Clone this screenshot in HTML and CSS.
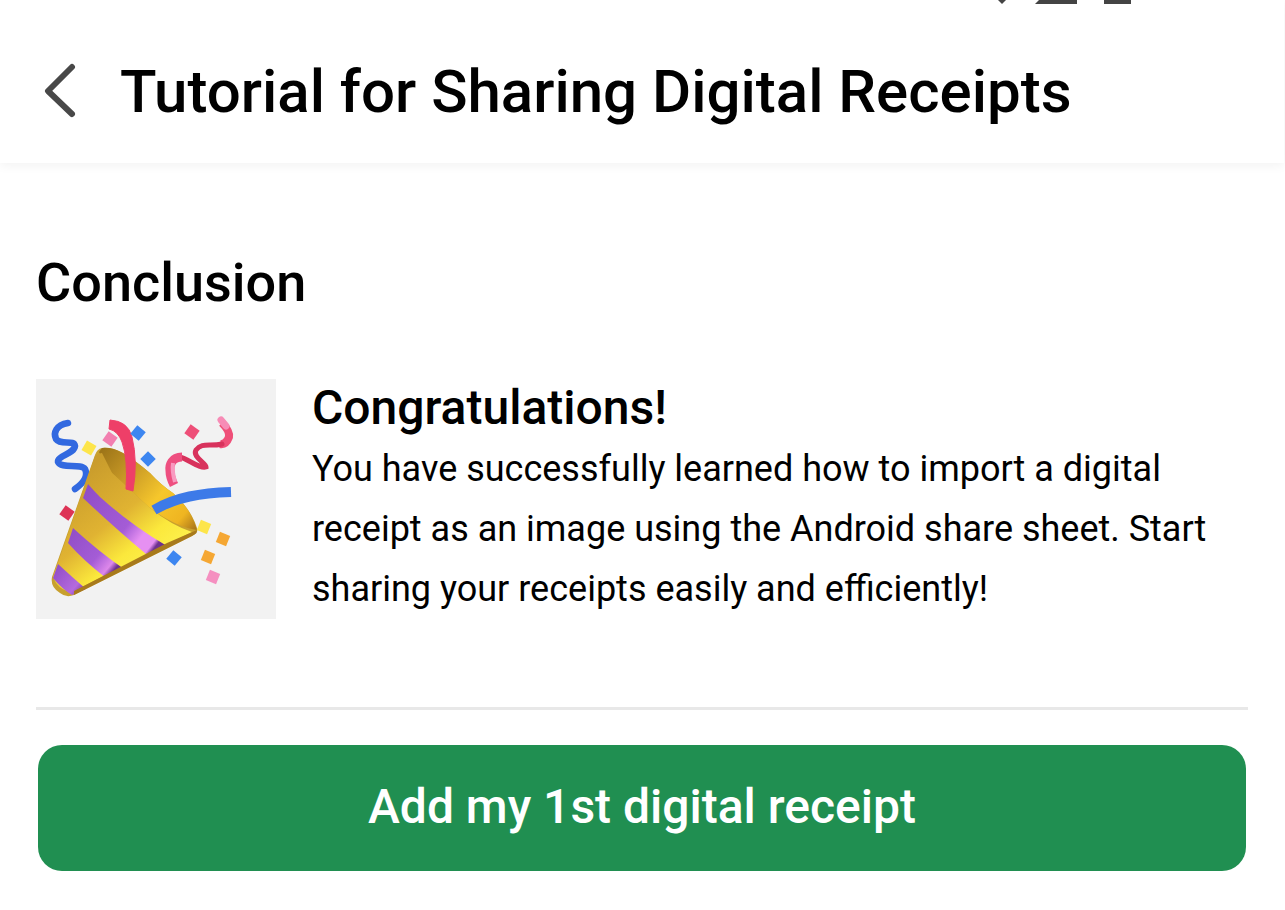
FILE: index.html
```html
<html>
    <head>
        <link rel="stylesheet" href="styles.css">
    </head>
    <body>
        <div class="topbar">
            <div class="header">
                <div class="statusbar">
                    <svg class="status-dot" width="8" height="4" viewBox="0 0 8 4"><path d="M0 0H8L4 4Z" fill="#444"/></svg>
                    <svg class="status-wide" width="42" height="4" viewBox="0 0 42 4"><path d="M4 0H42V4H0Z" fill="#444"/></svg>
                    <div class="status-batt"></div>
                </div>
                <div class="header-row">
                    <svg class="back" width="32" height="56" viewBox="0 0 32 56">
                        <path d="M28 4L4 28L28 51" fill="none" stroke="#484848" stroke-width="6" stroke-linecap="round" stroke-linejoin="round"/>
                    </svg>
                    <h1 class="title">Tutorial for Sharing Digital Receipts</h1>
                </div>
            </div>
        </div>
        <div class="content">
            <h2 class="section-title">Conclusion</h2>
            <div class="card">
                <div class="thumb">
                    <svg class="party" width="240" height="240" viewBox="0 0 240 240">
                        <defs>
                            <linearGradient id="gold" gradientUnits="userSpaceOnUse" x1="50" y1="90" x2="120" y2="180">
                                <stop offset="0" stop-color="#c99c2c"/>
                                <stop offset="0.5" stop-color="#e0b332"/>
                                <stop offset="0.8" stop-color="#fbe83c"/>
                                <stop offset="1" stop-color="#fdf04a"/>
                            </linearGradient>
                            <linearGradient id="purple" gradientUnits="userSpaceOnUse" x1="45" y1="110" x2="130" y2="175">
                                <stop offset="0" stop-color="#8f4cc6"/>
                                <stop offset="0.55" stop-color="#a45cd6"/>
                                <stop offset="0.72" stop-color="#e690f2"/>
                                <stop offset="0.84" stop-color="#e690f2"/>
                                <stop offset="0.88" stop-color="#6e3190"/>
                                <stop offset="1" stop-color="#6e3190"/>
                            </linearGradient>
                            <linearGradient id="purple2" gradientUnits="userSpaceOnUse" x1="30" y1="150" x2="88" y2="198">
                                <stop offset="0" stop-color="#8f4cc6"/>
                                <stop offset="0.55" stop-color="#a45cd6"/>
                                <stop offset="0.76" stop-color="#dd88ea"/>
                                <stop offset="0.84" stop-color="#6e3190"/>
                                <stop offset="1" stop-color="#6e3190"/>
                            </linearGradient>
                            <linearGradient id="purple3" gradientUnits="userSpaceOnUse" x1="18" y1="188" x2="50" y2="214">
                                <stop offset="0" stop-color="#8f4cc6"/>
                                <stop offset="0.7" stop-color="#b56ade"/>
                                <stop offset="1" stop-color="#6e3190"/>
                            </linearGradient>
                            <linearGradient id="inner" gradientUnits="userSpaceOnUse" x1="66" y1="70" x2="160" y2="150">
                                <stop offset="0" stop-color="#9c7418"/>
                                <stop offset="0.3" stop-color="#c99a26"/>
                                <stop offset="0.6" stop-color="#f6c72c"/>
                                <stop offset="0.85" stop-color="#efb521"/>
                                <stop offset="1" stop-color="#a8741a"/>
                            </linearGradient>
                            <clipPath id="cone">
                                <path d="M59 76L16 198Q14 208 24 214Q30 219 38 216L156 157Q164 153 161 151Q140 146 114 129L76 94Z"/>
                            </clipPath>
                        </defs>
                        <path d="M32 44C20 46 17 54 20 60C25 67 38 60 39 67C38 75 21 77 22 83C25 90 45 84 49 90C53 98 46 105 39 110" fill="none" stroke="#3269e0" stroke-width="6.500" stroke-linecap="round"/>
                        <path d="M66 69Q76 68 87 74Q100 82 114 94Q125 106 137 114Q155 130 161 149Q163 153 156 157L38 216Q30 219 24 214Q14 208 16 198L59 76Q61 70 66 69Z" fill="#c8a02e"/>
                        <path d="M66 69Q76 68 87 74Q100 82 114 94Q125 106 137 114Q155 130 161 151Q140 148 114 129L76 94Q68 84 63 73Z" fill="url(#inner)"/>
                        <path d="M59 77Q64 74 66 74L76 94L114 129Q135 146 156 153L38 212Q28 214 20 204L17 198Z" fill="url(#gold)"/>
                        <g clip-path="url(#cone)">
                            <path d="M52 105Q58 112 64 118Q95 146 131 167L110 175Q80 150 47 119Z" fill="url(#purple)"/>
                            <path d="M37 149Q62 172 88 190L70 199Q48 182 32 164Z" fill="url(#purple2)"/>
                            <path d="M22 185Q36 198 50 210L36 216Q26 210 17 199Z" fill="url(#purple3)"/>
                            <path d="M161 151L131 164L38 212L38 218L160 158Z" fill="#a87a1c"/>
                        </g>
                        <path d="M74 41Q92 42 96 58Q102 82 97 112L90 110Q92 80 86 63Q82 52 73 50Z" fill="#ee3f68" stroke="#ee3f68" stroke-linejoin="round"/>
                        <path d="M186 44Q194 52 193 58Q190 66 184 65" fill="none" stroke="#ef4f78" stroke-width="8"/>
                        <path d="M185 41L190 47" fill="none" stroke="#f78cb6" stroke-width="7" stroke-linecap="round"/>
                        <path d="M186 65C174 68 166 63 160 71C156 78 170 84 170 88C164 90 152 80 144 78" fill="none" stroke="#d8325c" stroke-width="5" stroke-linecap="round"/>
                        <path d="M146 78C136 78 133 86 134 92C134 98 136 102 138 106" fill="none" stroke="#ee4f80" stroke-width="9"/>
                        <path d="M137 84C136 90 137 96 139 103" fill="none" stroke="#f99ac0" stroke-width="4"/>
                        <path d="M118 131C140 118 165 114 195 113" fill="none" stroke="#3d7ae8" stroke-width="10"/>
                        <g>
                            <rect x="47.500" y="63.500" width="11" height="11" transform="rotate(30 53 69)" fill="#fde54a"/>
                            <rect x="68.500" y="54.500" width="11" height="11" transform="rotate(35 74 60)" fill="#f27fb0"/>
                            <rect x="96.500" y="48.500" width="11" height="11" transform="rotate(40 102 54)" fill="#3d86f0"/>
                            <rect x="106.500" y="74.500" width="11" height="11" transform="rotate(45 112 80)" fill="#3d86f0"/>
                            <rect x="150.500" y="47.500" width="11" height="11" transform="rotate(35 156 53)" fill="#ee4f78"/>
                            <rect x="25.500" y="128.500" width="11" height="11" transform="rotate(35 31 134)" fill="#dd3355"/>
                            <rect x="162.500" y="142.500" width="11" height="11" transform="rotate(22 168 148)" fill="#fde54a"/>
                            <rect x="181.500" y="154.500" width="11" height="11" transform="rotate(22 187 160)" fill="#f5a733"/>
                            <rect x="166.500" y="172.500" width="11" height="11" transform="rotate(22 172 178)" fill="#f5a733"/>
                            <rect x="132.500" y="173.500" width="11" height="11" transform="rotate(40 138 179)" fill="#3d86f0"/>
                            <rect x="171.500" y="192.500" width="11" height="11" transform="rotate(22 177 198)" fill="#f58fc0"/>
                        </g>
                    </svg>
                </div>
                <div class="card-text">
                    <h3 class="card-title">Congratulations!</h3>
                    <p class="card-body">You have successfully learned how to import a digital receipt as an image using the Android share sheet. Start sharing your receipts easily and efficiently!</p>
                </div>
            </div>
            <div class="divider"></div>
            <button class="primary">Add my 1st digital receipt</button>
        </div>
    </body>
</html>
```
FILE: styles.css
```css
* {
    font-family: Roboto, sans-serif;
    box-sizing: border-box;
}
body {
    margin: 0;
    background-color: #fff;
    color: #000;
}
.header {
    height: 163px;
    margin-right: 1px;
    background-color: #fff;
    box-shadow: 0 3px 10px rgba(0, 0, 0, 0.05);
}
.statusbar {
    display: flex;
    justify-content: flex-end;
    height: 4px;
    padding-right: 153px;
}
.status-dot {
    margin-right: 29px;
}
.status-batt {
    width: 27px;
    height: 4px;
    margin-left: 27px;
    background-color: #444;
}
.header-row {
    display: flex;
    align-items: center;
    height: 174px;
    padding-left: 44px;
}
.back {
    margin-right: 44px;
}
.title {
    margin: 0;
    padding-top: 2px;
    font-size: 60px;
    font-weight: 500;
    line-height: 1;
}
.content {
    padding: 0 37px 0 36px;
}
.section-title {
    margin: 88px 0 0;
    font-size: 54px;
    font-weight: 500;
    line-height: 64px;
}
.card {
    display: flex;
    gap: 36px;
    margin-top: 64px;
}
.thumb {
    flex: none;
    width: 240px;
    height: 240px;
    background-color: #f2f2f2;
}
.party {
    display: block;
    filter: blur(0.7px);
}
.card-title {
    margin: 0 0 2px;
    font-size: 48px;
    font-weight: 500;
    line-height: 58px;
}
.card-body {
    margin: 0;
    font-size: 36px;
    line-height: 60px;
}
.divider {
    height: 3px;
    margin-top: 88px;
    background-color: #e8e8e8;
}
.primary {
    display: block;
    width: 1208px;
    height: 126px;
    margin: 35px 0 0 2px;
    padding-bottom: 4px;
    border: none;
    border-radius: 24px;
    background-color: #208f51;
    color: #fff;
    font-size: 48px;
    font-weight: 500;
}
```
